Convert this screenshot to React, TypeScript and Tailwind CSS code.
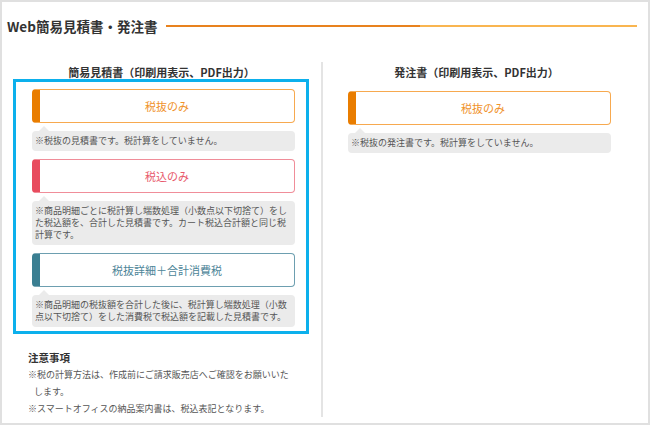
const font = { fontFamily: '"Noto Sans CJK JP", "Noto Sans", sans-serif' };

type Variant = "orange" | "pink" | "teal";

const variants: Record<Variant, { box: string; text: string }> = {
  orange: { box: "border-[#f7a94f] border-l-[#e97d00]", text: "text-[#f0922a]" },
  pink: { box: "border-[#f08d99] border-l-[#e84c5e]", text: "text-[#e85a6c]" },
  teal: { box: "border-[#6d9fb0] border-l-[#3b7f92]", text: "text-[#4c8497]" },
};

function OptionButton({ label, variant }: { label: string; variant: Variant }) {
  const v = variants[variant];
  return (
    <div
      className={`flex h-[34px] items-center justify-center rounded-[4px] border border-l-[8px] bg-white text-[11px] ${v.box} ${v.text}`}
    >
      {label}
    </div>
  );
}

function Note({ children }: { children: React.ReactNode }) {
  return (
    <div className="relative mt-[8px] rounded-[4px] bg-[#ebebeb] py-[4px] pl-[3px] pr-[4px] text-[9px] leading-[12px] text-[#555]">
      <span className="absolute -top-[5px] left-[7px] h-0 w-0 border-x-[5px] border-b-[5px] border-x-transparent border-b-[#ebebeb]" />
      {children}
    </div>
  );
}

export default function App() {
  return (
    <div
      className="flex h-[425px] w-[650px] flex-col border-2 border-[#e0e0e0] bg-white text-[#333]"
      style={font}
    >
      {/* header */}
      <div className="mt-[14px] flex h-[20px] items-center pl-[5px] pr-[11px]">
        <h1 className="text-[13.5px] font-bold text-[#333]">Web簡易見積書・発注書</h1>
        <div className="ml-[9px] h-[2px] flex-1 bg-[linear-gradient(to_right,#e8821e_54%,#f9b550_54%)]" />
      </div>

      <div className="mt-[26px] flex h-[355px]">
        {/* left column */}
        <div className="w-[319px] pt-[3px]">
          <h2 className="text-center text-[11px] font-bold leading-[15px]">
            簡易見積書（印刷用表示、PDF出力）
          </h2>
          <div className="ml-[11px] mt-[-1px] w-[296px] border-[3px] border-[#0cb0ec] pb-[4px] pl-[16px] pr-[11px] pt-[7px]">
            <OptionButton label="税抜のみ" variant="orange" />
            <Note>※税抜の見積書です。税計算をしていません。</Note>
            <div className="mt-[8px]">
              <OptionButton label="税込のみ" variant="pink" />
            </div>
            <Note>
              ※商品明細ごとに税計算し端数処理（小数点以下切捨て）をした税込額を、合計した見積書です。カート税込合計額と同じ税計算です。
            </Note>
            <div className="mt-[8px]">
              <OptionButton label="税抜詳細＋合計消費税" variant="teal" />
            </div>
            <Note>
              ※商品明細の税抜額を合計した後に、税計算し端数処理（小数点以下切捨て）をした消費税で税込額を記載した見積書です。
            </Note>
          </div>

          <div className="ml-[26px] mt-[15px] w-[266px] text-[9px] leading-[17px] text-[#555]">
            <p className="text-[10.5px] font-bold text-[#333]">注意事項</p>
            <p className="pl-[6px] -indent-[6px]">
              ※税の計算方法は、作成前にご請求販売店へご確認をお願いいたします。
            </p>
            <p className="pl-[6px] -indent-[6px]">
              ※スマートオフィスの納品案内書は、税込表記となります。
            </p>
          </div>
        </div>

        {/* divider */}
        <div className="w-[2px] bg-[#e4e4e4]" />

        {/* right column */}
        <div className="w-[307px] pt-[3px]">
          <h2 className="text-center text-[11px] font-bold leading-[15px]">
            発注書（印刷用表示、PDF出力）
          </h2>
          <div className="ml-[25px] mt-[11px] w-[263px]">
            <OptionButton label="税抜のみ" variant="orange" />
            <Note>※税抜の発注書です。税計算をしていません。</Note>
          </div>
        </div>
      </div>
    </div>
  );
}
